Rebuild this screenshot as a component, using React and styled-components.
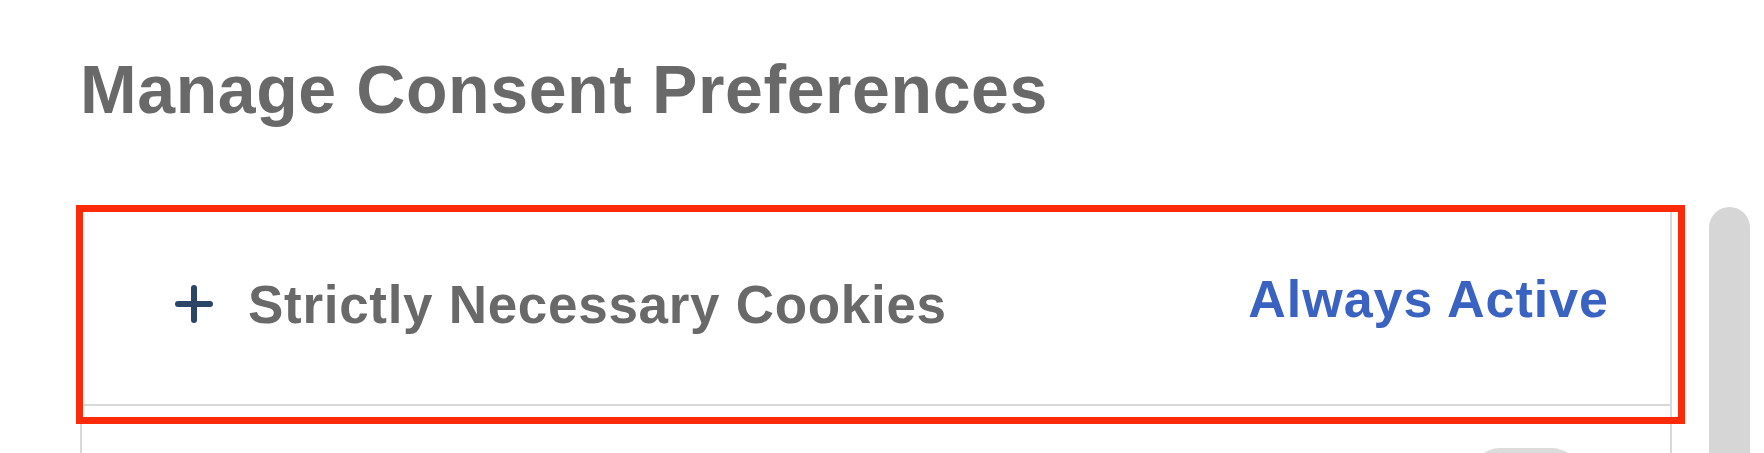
import styled, { createGlobalStyle } from "styled-components";

const GlobalStyle = createGlobalStyle`
  html, body {
    margin: 0;
    padding: 0;
    height: 453px;
    overflow: hidden;
    background: #ffffff;
  }

  * {
    box-sizing: border-box;
  }
`;

/* Page: content column + scrollbar column */
const Page = styled.div`
  display: flex;
  align-items: flex-start;
  width: 1764px;
  height: 453px;
  overflow: hidden;
  font-family: "Liberation Sans", Arial, sans-serif;
`;

const Content = styled.main`
  display: flex;
  flex-direction: column;
  width: 1672px;
  padding-left: 80px;
`;

const Title = styled.h1`
  margin: 55px 0 0;
  font-size: 68px;
  line-height: 68px;
  font-weight: 700;
  color: #696969;
  letter-spacing: 0.6px;
`;

/* Accordion list */
const List = styled.div`
  position: relative;
  margin-top: 85px;
  width: 1592px;
  border: 2px solid #d9d9d9;
  border-bottom: none;
`;

const Row = styled.div`
  display: flex;
  align-items: center;
  justify-content: ${(p) => (p.$end ? "flex-end" : "space-between")};
  height: 196px;
  padding: 0 ${(p) => p.$padRight}px ${(p) => p.$padBottom || 0}px 93px;
  border-bottom: 2px solid #d9d9d9;
`;

const RowLabel = styled.div`
  display: flex;
  align-items: center;
  gap: 35px;
`;

const RowTitle = styled.span`
  font-size: 53px;
  line-height: 53px;
  font-weight: 700;
  color: #696969;
  letter-spacing: 0.7px;
`;

const Status = styled.span`
  font-size: 52px;
  line-height: 52px;
  font-weight: 700;
  color: #3a62c0;
  letter-spacing: 1px;
  margin-top: -10px;
`;

const Toggle = styled.div`
  width: 108px;
  height: 56px;
  margin-top: ${(p) => p.$offset}px;
  border-radius: 28px;
  background: #dcdcdc;
`;

/* Red highlight drawn over the first row */
const Highlight = styled.div`
  position: absolute;
  left: -6px;
  top: -5px;
  width: 1609px;
  height: 219px;
  border: 7px solid #fb2a08;
  pointer-events: none;
`;

/* Scrollbar */
const ScrollColumn = styled.div`
  padding: 207px 14px 0 37px;
`;

const ScrollThumb = styled.div`
  width: 41px;
  height: 400px;
  border-radius: 21px 21px 0 0;
  background: #d6d6d6;
`;

function PlusIcon() {
  return (
    <svg width="38" height="38" viewBox="0 0 38 38" fill="none">
      <path
        d="M19 3v32M3 19h32"
        stroke="#2a4566"
        strokeWidth="6"
        strokeLinecap="round"
      />
    </svg>
  );
}

export default function App() {
  return (
    <>
      <GlobalStyle />
      <Page>
        <Content>
          <Title>Manage Consent Preferences</Title>

          <List>
            <Row $padRight={61} $padBottom={6}>
              <RowLabel>
                <PlusIcon />
                <RowTitle>Strictly Necessary Cookies</RowTitle>
              </RowLabel>
              <Status>Always Active</Status>
            </Row>

            {/* next category, only its switch peeks into view */}
            <Row $end $padRight={90}>
              <Toggle $offset={-54} />
            </Row>

            <Highlight />
          </List>
        </Content>

        <ScrollColumn>
          <ScrollThumb />
        </ScrollColumn>
      </Page>
    </>
  );
}
